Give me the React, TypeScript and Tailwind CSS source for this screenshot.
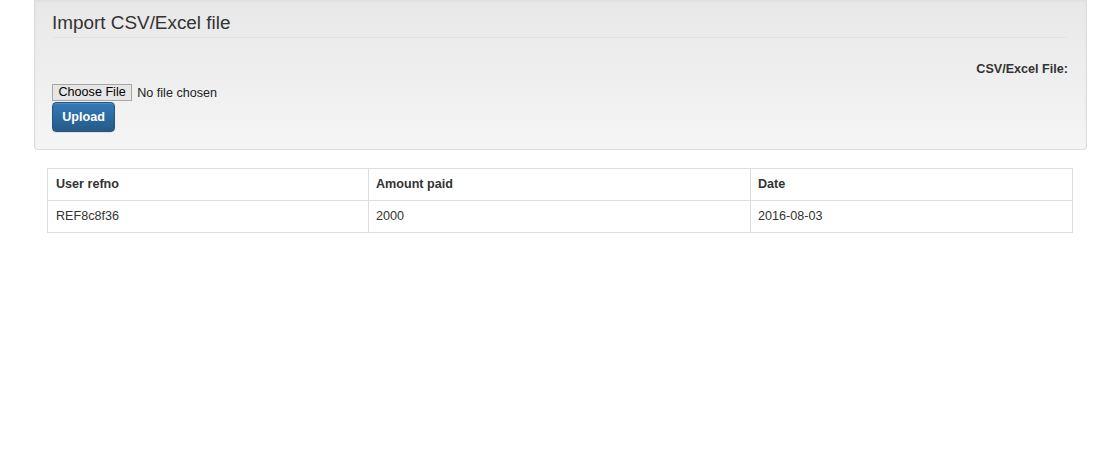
const rows = [
  { refno: 'REF8c8f36', amount: '2000', date: '2016-08-03' },
];

export default function App() {
  return (
    <div className="min-h-[450px] bg-white text-[#333] font-['Liberation_Sans',Arial,sans-serif]">
      {/* Import well */}
      <div className="mx-[34px] w-[1053px] rounded-b-[4px] border border-t-0 border-[#dcdcdc] bg-gradient-to-b from-[#e8e8e8] to-[#f5f5f5] pl-[17px] pr-[18px] pt-[8px] pb-[17px] shadow-[inset_0_1px_3px_rgba(0,0,0,0.05)]">
        <div className="border-b border-[#e3e3e3] text-[18.9px] leading-[29px]">
          Import CSV/Excel file
        </div>

        <div className="mt-[21px] text-right text-[12.6px] font-bold leading-[20px]">
          CSV/Excel File:
        </div>

        <div className="mt-[5px] flex items-center gap-[5px] text-[12.6px] leading-[16px]">
          <span className="border border-[#a6a6a6] bg-[#e6e6e6] px-[5.5px] leading-[15px] text-black">
            Choose File
          </span>
          <span className="text-[#222]">No file chosen</span>
        </div>

        <button className="mt-px h-[30px] w-[63px] rounded-[4px] border border-[#245580] bg-gradient-to-b from-[#337ab7] to-[#265a88] text-[12.6px] font-bold text-white shadow-[inset_0_1px_0_rgba(255,255,255,0.15),0_1px_1px_rgba(0,0,0,0.075)]">
          Upload
        </button>
      </div>

      {/* Results table */}
      <div className="mx-[47px] mt-[18px] w-[1026px]">
        <table className="w-full border-collapse border border-[#ddd] text-[12.6px] leading-[17px]">
          <thead>
            <tr>
              <th className="w-[321px] border border-[#ddd] px-[8px] py-[7px] text-left font-bold">User refno</th>
              <th className="w-[382px] border border-[#ddd] px-[7px] py-[7px] text-left font-bold">Amount paid</th>
              <th className="border border-[#ddd] px-[7px] py-[7px] text-left font-bold">Date</th>
            </tr>
          </thead>
          <tbody>
            {rows.map((r) => (
              <tr key={r.refno}>
                <td className="border border-[#ddd] px-[8px] py-[7px]">{r.refno}</td>
                <td className="border border-[#ddd] px-[7px] py-[7px]">{r.amount}</td>
                <td className="border border-[#ddd] px-[7px] py-[7px]">{r.date}</td>
              </tr>
            ))}
          </tbody>
        </table>
      </div>
    </div>
  );
}
